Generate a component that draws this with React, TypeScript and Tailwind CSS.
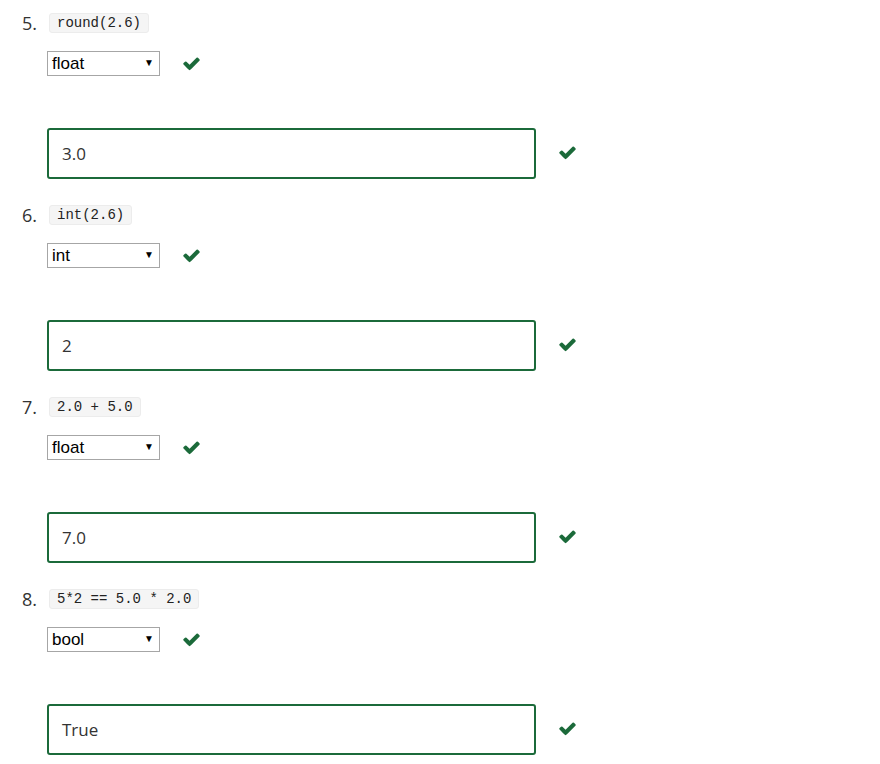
import React from 'react'

interface Question {
  num: number
  code: string
  type: string
  answer: string
}

const questions: Question[] = [
  { num: 5, code: 'round(2.6)', type: 'float', answer: '3.0' },
  { num: 6, code: 'int(2.6)', type: 'int', answer: '2' },
  { num: 7, code: '2.0 + 5.0', type: 'float', answer: '7.0' },
  { num: 8, code: '5*2 == 5.0 * 2.0', type: 'bool', answer: 'True' },
]

function Check() {
  return (
    <svg viewBox="0 0 1792 1792" width="19" height="19" className="shrink-0">
      <path
        fill="#1b6a3a"
        d="M1671 566q0 40-28 68l-724 724-136 136q-28 28-68 28t-68-28l-136-136-362-362q-28-28-28-68t28-68l136-136q28-28 68-28t68 28l294 295 656-657q28-28 68-28t68 28l136 136q28 28 28 68z"
      />
    </svg>
  )
}

function QuestionItem({ q }: { q: Question }) {
  return (
    <div className="h-[192px] pt-[13px]">
      {/* prompt */}
      <div className="flex items-center h-[20px]">
        <span className="w-[27px] text-[18px] text-[#333] font-['Open_Sans',sans-serif]">
          {q.num}.
        </span>
        <code className="px-[7px] h-[20px] flex items-center rounded-[3px] bg-[#f5f5f5] border border-[#ececec] text-[14px] text-[#222] font-['Liberation_Mono',monospace] whitespace-pre">
          {q.code}
        </code>
      </div>

      {/* type select */}
      <div className="flex items-center mt-[18px] ml-[25px]">
        <div className="relative w-[113px] h-[25px] border border-[#a6a6a6] bg-white flex items-center pl-[4px] text-[17px] text-black font-['Liberation_Sans',sans-serif]">
          {q.type}
          <span className="absolute right-[5px] top-[6px] text-[10px] leading-none">▼</span>
        </div>
        <div className="ml-[22px] -mt-[1px]">
          <Check />
        </div>
      </div>

      {/* value input */}
      <div className="flex items-center mt-[52px] ml-[25px]">
        <div className="w-[489px] h-[51px] border-2 border-[#1b6a3a] rounded-[3px] flex items-center pl-[13px] text-[17px] text-[#333] font-['Open_Sans',sans-serif]">
          {q.answer}
        </div>
        <div className="ml-[22px] -mt-[3px]">
          <Check />
        </div>
      </div>
    </div>
  )
}

export default function App() {
  return (
    <div className="w-[880px] h-[764px] bg-white overflow-hidden pl-[22px]">
      {questions.map((q) => (
        <QuestionItem key={q.num} q={q} />
      ))}
    </div>
  )
}
